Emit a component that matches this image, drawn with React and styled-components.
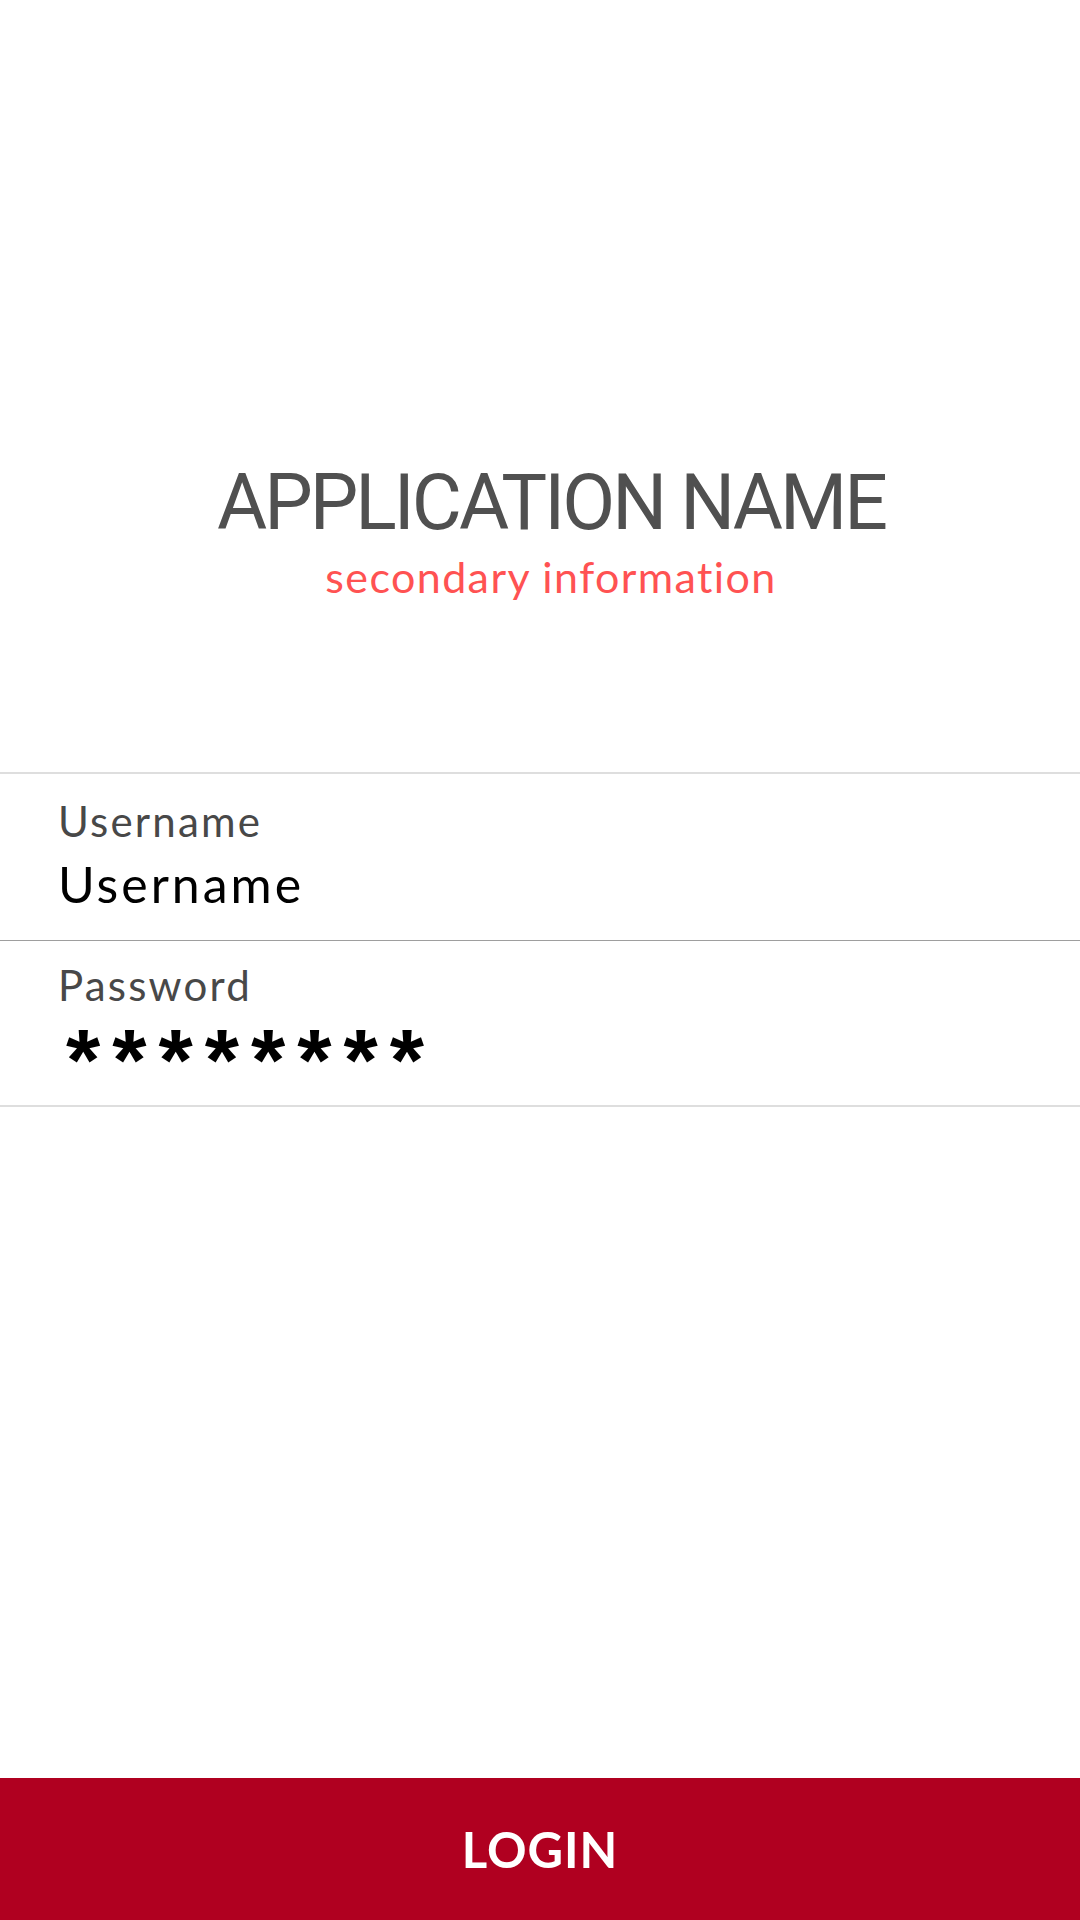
import React from 'react';
import styled, { createGlobalStyle } from 'styled-components';

const GlobalStyle = createGlobalStyle`
  html, body {
    margin: 0;
    padding: 0;
    background: #ffffff;
  }
  * {
    box-sizing: border-box;
  }
`;

const Page = styled.div`
  min-height: 100vh;
  display: flex;
  flex-direction: column;
  background: #ffffff;
  font-family: Lato, "Open Sans", sans-serif;
`;

const Header = styled.header`
  display: flex;
  flex-direction: column;
  align-items: center;
  padding: 465px 0 174px 22px;
`;

const AppName = styled.h1`
  margin: 0;
  font-family: Roboto, "Liberation Sans", sans-serif;
  font-weight: 400;
  font-size: 77px;
  line-height: 1;
  letter-spacing: -3px;
  color: #505050;
`;

const SecondaryInfo = styled.div`
  margin-top: 13px;
  font-size: 43px;
  line-height: 1;
  letter-spacing: 1.4px;
  color: #ff5252;
`;

const Form = styled.form`
  display: flex;
  flex-direction: column;
  border-top: 2px solid #dedede;
`;

const Field = styled.div`
  display: flex;
  flex-direction: column;
  padding: ${(props) => props.$top}px 0 ${(props) => props.$bottom}px 58px;
  border-bottom: ${(props) => (props.$last ? '2px solid #dedede' : '1px solid #9e9e9e')};
`;

const Label = styled.label`
  font-size: 42px;
  line-height: 1;
  letter-spacing: 2.2px;
  color: #484848;
`;

const Value = styled.div`
  margin-top: 17px;
  font-size: 50px;
  line-height: 1;
  letter-spacing: 3px;
  color: #000000;
`;

const Secret = styled.div`
  margin: 19px 0 0 8px;
  font-family: "Liberation Sans", Arial, sans-serif;
  font-weight: 700;
  font-size: 88px;
  line-height: 70px;
  height: 70px;
  letter-spacing: 12px;
  color: #000000;
`;

const Spacer = styled.div`
  flex: 1;
`;

const LoginButton = styled.button`
  height: 142px;
  width: 100%;
  border: none;
  margin: 0;
  display: flex;
  align-items: center;
  justify-content: center;
  background-color: #b00020;
  color: #ffffff;
  font-family: Lato, "Open Sans", sans-serif;
  font-weight: 700;
  font-size: 49px;
  line-height: 1;
  letter-spacing: 1px;
  cursor: pointer;
`;

const App = () => {
  return (
    <>
      <GlobalStyle />
      <Page>
        <Header>
          <AppName>APPLICATION NAME</AppName>
          <SecondaryInfo>secondary information</SecondaryInfo>
        </Header>

        <Form onSubmit={(e) => e.preventDefault()}>
          <Field $top={26} $bottom={31}>
            <Label>Username</Label>
            <Value>Username</Value>
          </Field>
          <Field $top={23} $bottom={10} $last>
            <Label>Password</Label>
            <Secret>********</Secret>
          </Field>
        </Form>

        <Spacer />

        <LoginButton type="button">LOGIN</LoginButton>
      </Page>
    </>
  );
};

export default App;
